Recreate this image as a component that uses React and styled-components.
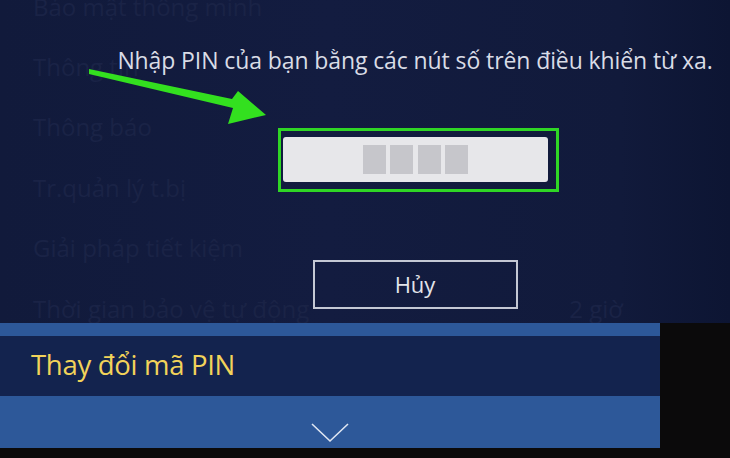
import React from "react";
import styled, { createGlobalStyle } from "styled-components";

const Global = createGlobalStyle`
  html, body { margin: 0; padding: 0; background: #0a0a0c; }
  body { width: 730px; height: 458px; overflow: hidden; font-family: "Open Sans", "Noto Sans", sans-serif; }
`;

const Screen = styled.div`
  width: 730px;
  height: 458px;
  display: flex;
  flex-direction: column;
  background: #0b0a0b;
`;

const Main = styled.div`
  position: relative;
  height: 323px;
  overflow: hidden;
  background: linear-gradient(90deg, #111a3b 0%, #131c40 45%, #111a3b 85%, #0d1533 100%);
`;

const MenuList = styled.ul`
  list-style: none;
  margin: -24px 0 0 0;
  padding: 0 0 0 33px;
  display: flex;
  flex-direction: column;
`;

const MenuItem = styled.li`
  height: 60.4px;
  display: flex;
  align-items: center;
  justify-content: space-between;
  width: 590px;
  font-size: 24px;
  color: #1a2346;
`;

const Dialog = styled.div`
  position: absolute;
  left: 105px;
  top: 0;
  width: 620px;
  height: 323px;
  display: flex;
  flex-direction: column;
  align-items: center;
`;

const Prompt = styled.p`
  margin: 43px 0 0;
  font-size: 23px;
  line-height: 34px;
  color: #d9dce6;
  white-space: nowrap;
  letter-spacing: -0.1px;
`;

const Highlight = styled.div`
  margin-top: 51px;
  margin-left: 7px;
  width: 281px;
  height: 64px;
  box-sizing: border-box;
  border: 3.5px solid #2fd625;
  padding: 6px 8px 7px 1.5px;
  display: flex;
`;

const PinField = styled.div`
  flex: 1;
  background: #e7e7ea;
  border-radius: 3px;
  display: flex;
  justify-content: center;
  align-items: center;
  gap: 4.5px;
`;

const PinSlot = styled.span`
  width: 23px;
  height: 29px;
  background: #c6c6cb;
`;

const CancelButton = styled.button`
  margin-top: 68px;
  width: 205px;
  height: 49px;
  box-sizing: border-box;
  border: 2px solid #c4c8d4;
  background: transparent;
  color: #e2e4ea;
  font-family: inherit;
  font-size: 22px;
  display: flex;
  align-items: center;
  justify-content: center;
  padding: 0 0 2px;
`;

const Pointer = styled.svg`
  position: absolute;
  left: 0;
  top: 0;
`;

const Footer = styled.div`
  width: 660px;
  height: 125px;
  display: flex;
  flex-direction: column;
`;

const Stripe = styled.div`
  height: ${(p) => p.h}px;
  background: #2d5899;
`;

const Selected = styled.div`
  height: 60px;
  background: #13234e;
  display: flex;
  align-items: center;
  padding-left: 31px;
  font-size: 27.5px;
  font-weight: 500;
  letter-spacing: -0.3px;
  color: #f2d35a;
  padding-bottom: 3px;
  box-sizing: border-box;
`;

const More = styled.div`
  flex: 1;
  background: #2d5899;
  display: flex;
  justify-content: center;
  align-items: flex-end;
  padding-bottom: 5px;
`;

const rows = [
  ["Bảo mật thông minh", ""],
  ["Thông tin", ""],
  ["Thông báo", ""],
  ["Tr.quản lý t.bị", ""],
  ["Giải pháp tiết kiệm", ""],
  ["Thời gian bảo vệ tự động", "2 giờ"],
];

export default function App() {
  return (
    <>
      <Global />
      <Screen>
        <Main>
          <MenuList>
            {rows.map(([label, value]) => (
              <MenuItem key={label}>
                <span>{label}</span>
                <span>{value}</span>
              </MenuItem>
            ))}
          </MenuList>
          <Dialog>
            <Prompt>Nhập PIN của bạn bằng các nút số trên điều khiển từ xa.</Prompt>
            <Highlight>
              <PinField>
                <PinSlot />
                <PinSlot />
                <PinSlot />
                <PinSlot />
              </PinField>
            </Highlight>
            <CancelButton>Hủy</CancelButton>
          </Dialog>
          <Pointer width="730" height="323" viewBox="0 0 730 323">
            <polygon
              points="89,69 232,99 238,91 266,115 228,124 233,108 89,74"
              fill="#33e01f"
            />
          </Pointer>
        </Main>
        <Footer>
          <Stripe h={13} />
          <Selected>Thay đổi mã PIN</Selected>
          <More>
            <svg width="38" height="22" viewBox="0 0 38 22">
              <polyline points="1,3 19,20 37,3" fill="none" stroke="#dfe6f2" strokeWidth="1.6" />
            </svg>
          </More>
        </Footer>
      </Screen>
    </>
  );
}
